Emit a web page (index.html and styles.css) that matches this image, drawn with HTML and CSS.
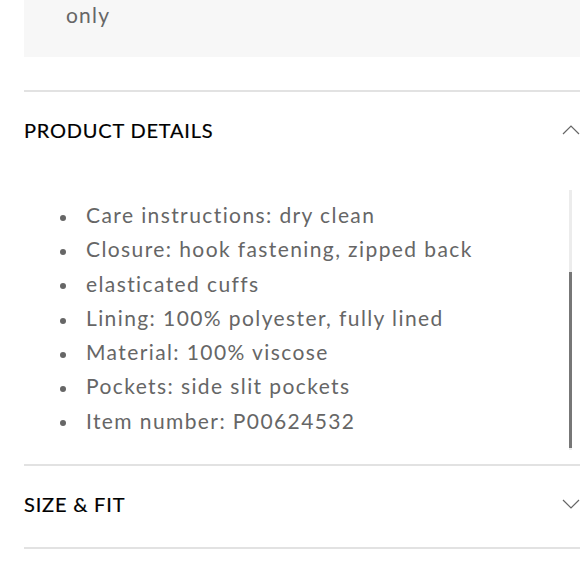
FILE: index.html
```html
<!DOCTYPE html>
<html>
<head>
<meta charset="utf-8">
<link rel="stylesheet" href="styles.css">
</head>
<body>
<div class="page">
  <div class="note"><span class="note-text">only</span></div>

  <section class="acc open">
    <div class="acc-head">
      <h2 class="acc-title">PRODUCT DETAILS</h2>
      <svg class="chev" width="18" height="10" viewBox="0 0 18 10"><path d="M1 9 L9 1 L17 9" fill="none" stroke="#666" stroke-width="1.2"/></svg>
    </div>
    <div class="acc-body">
      <ul class="details">
        <li>Care instructions: dry clean</li>
        <li>Closure: hook fastening, zipped back</li>
        <li>elasticated cuffs</li>
        <li>Lining: 100% polyester, fully lined</li>
        <li>Material: 100% viscose</li>
        <li>Pockets: side slit pockets</li>
        <li>Item number: P00624532</li>
      </ul>
      <div class="scroll-track"><div class="scroll-thumb"></div></div>
    </div>
  </section>

  <section class="acc">
    <div class="acc-head closed">
      <h2 class="acc-title">SIZE &amp; FIT</h2>
      <svg class="chev" width="18" height="10" viewBox="0 0 18 10"><path d="M1 1 L9 9 L17 1" fill="none" stroke="#666" stroke-width="1.2"/></svg>
    </div>
  </section>
</div>
</body>
</html>
```
FILE: styles.css
```css
html, body {
  margin: 0;
  padding: 0;
  background: #fff;
  overflow: hidden;
}
.page {
  padding-left: 24px;
  font-family: "Lato", "Liberation Sans", sans-serif;
}
.note {
  height: 57px;
  background: #f7f7f7;
  padding: 2px 0 0 42px;
  box-sizing: border-box;
}
.note-text {
  display: block;
  font-size: 21px;
  line-height: 26px;
  color: #666;
  letter-spacing: 1.2px;
}
.acc {
  border-top: 2px solid #e2e2e2;
}
.note + .acc {
  margin-top: 33px;
}
.acc-head {
  height: 76px;
  display: flex;
  align-items: center;
  justify-content: space-between;
}
.acc-head.closed {
  height: 83px;
  padding-bottom: 5px;
  box-sizing: border-box;
  border-bottom: 2px solid #e2e2e2;
}
.acc-title {
  margin: 0;
  font-size: 20px;
  font-weight: 400;
  color: #000;
  letter-spacing: 0.8px;
  -webkit-text-stroke: 0.2px #000;
}
.chev {
  display: block;
}
.acc-body {
  display: flex;
  justify-content: space-between;
  margin-top: 22px;
  height: 260px;
  padding-bottom: 14px;
}
.details {
  list-style: none;
  margin: 0;
  padding: 8px 0 0 36px;
}
.details li {
  font-size: 21px;
  line-height: 34.3px;
  color: #666;
  letter-spacing: 1.4px;
  white-space: nowrap;
}
.details li::before {
  content: "";
  display: inline-block;
  width: 6px;
  height: 6px;
  border-radius: 50%;
  background: #666;
  margin-right: 20px;
  vertical-align: middle;
}
.scroll-track {
  width: 3px;
  height: 260px;
  background: #ececec;
  margin-right: 8px;
  display: flex;
  flex-direction: column;
  justify-content: flex-end;
}
.scroll-thumb {
  height: 176px;
  margin-bottom: 2px;
  background: #777;
}
```
